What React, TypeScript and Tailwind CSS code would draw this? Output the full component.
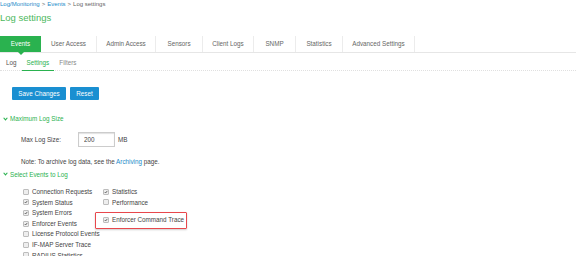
import { useState } from "react";

const tabs = [
  { label: "Events", w: "w-[41px]" },
  { label: "User Access", w: "w-[56px]" },
  { label: "Admin Access", w: "w-[59px]" },
  { label: "Sensors", w: "w-[47px]" },
  { label: "Client Logs", w: "w-[51px]" },
  { label: "SNMP", w: "w-[42px]" },
  { label: "Statistics", w: "w-[47px]" },
  { label: "Advanced Settings", w: "w-[72px]" },
];

const leftEvents = [
  { label: "Connection Requests", checked: false },
  { label: "System Status", checked: true },
  { label: "System Errors", checked: true },
  { label: "Enforcer Events", checked: true },
  { label: "License Protocol Events", checked: false },
  { label: "IF-MAP Server Trace", checked: false },
  { label: "RADIUS Statistics", checked: false },
];

function Box({ checked }: { checked: boolean }) {
  return (
    <span className="flex h-[6px] w-[6px] shrink-0 items-center justify-center rounded-[1px] border border-[#bdbdbd] bg-[#eeeeee]">
      {checked && (
        <svg viewBox="0 0 8 8" className="h-[6px] w-[6px]">
          <path d="M1.5 4.2 L3.2 6 L6.6 1.8" fill="none" stroke="#333" strokeWidth="1.4" />
        </svg>
      )}
    </span>
  );
}

function Check({ label, checked }: { label: string; checked: boolean }) {
  return (
    <div className="flex h-[10.6px] items-center gap-[3px] whitespace-nowrap">
      <Box checked={checked} />
      <span>{label}</span>
    </div>
  );
}

function Chevron() {
  return (
    <svg viewBox="0 0 8 6" className="h-[4px] w-[5px]">
      <path d="M1 1 L4 4.5 L7 1" fill="none" stroke="#2ab24f" strokeWidth="1.8" />
    </svg>
  );
}

export default function App() {
  const [size, setSize] = useState("200");

  return (
    <div className="h-[256px] w-[576px] overflow-hidden bg-white font-['Liberation_Sans',Arial,sans-serif] text-[6.3px] text-[#444]">
      <div className="flex h-[9px] items-center text-[6px] text-[#666]">
        <span className="text-[#1b8ac9]">Log/Monitoring</span>
        <span className="mx-[2px]">&gt;</span>
        <span className="text-[#1b8ac9]">Events</span>
        <span className="mx-[2px]">&gt;</span>
        <span>Log settings</span>
      </div>
      <h1 className="mt-[4px] h-[10px] text-[9.5px] leading-[10px] text-[#4cb85c]">Log settings</h1>

      <div className="mt-[13px] flex h-[17px] border-b border-[#e6e6e6]">
        {tabs.map((t, i) => (
          <div
            key={t.label}
            className={`relative flex items-center justify-center ${t.w} ${
              i === 0 ? "bg-[#2ab24f] text-white" : "border-r border-[#ececec] text-[#666]"
            }`}
          >
            {t.label}
            {i === 0 && (
              <span className="absolute -bottom-[3px] left-1/2 h-0 w-0 -translate-x-1/2 border-x-[3px] border-t-[3px] border-x-transparent border-t-[#2ab24f]" />
            )}
          </div>
        ))}
      </div>

      <div className="flex h-[18px] items-center gap-[10px] border-b border-dotted border-[#e0e0e0] pl-[6px] pt-[2px] text-[#555]">
        <span>Log</span>
        <span className="relative text-[#2ab24f]">
          Settings
          <span className="absolute -bottom-[4px] -left-[5px] -right-[5px] h-[1.5px] bg-[#2ab24f]" />
        </span>
        <span className="text-[#888]">Filters</span>
      </div>

      <div className="mt-[16px] flex gap-[4px] pl-[12px]">
        <button className="h-[13px] w-[54px] rounded-[1px] bg-[#1a8fd1] text-white">Save Changes</button>
        <button className="h-[13px] w-[29px] rounded-[1px] bg-[#1a8fd1] text-white">Reset</button>
      </div>

      <div className="mt-[15px] flex h-[8px] items-center gap-[2px] pl-[3px] text-[#2ab24f]">
        <Chevron />
        <span>Maximum Log Size</span>
      </div>

      <div className="mt-[9px] flex items-center pl-[21px]">
        <span className="w-[57px]">Max Log Size:</span>
        <input
          value={size}
          onChange={(e) => setSize(e.target.value)}
          className="h-[15px] w-[37px] border border-[#ccc] pl-[5px] text-[6.3px] text-[#444] shadow-[inset_0_1px_1px_rgba(0,0,0,0.12)] outline-none"
        />
        <span className="ml-[3px]">MB</span>
      </div>

      <div className="mt-[10px] pl-[21px]">
        Note: To archive log data, see the <span className="text-[#1b8ac9]">Archiving</span> page.
      </div>

      <div className="mt-[4px] flex h-[8px] items-center gap-[2px] pl-[3px] text-[#2ab24f]">
        <Chevron />
        <span>Select Events to Log</span>
      </div>

      <div className="mt-[8px] flex pl-[23px]">
        <div className="w-[80px]">
          {leftEvents.map((e) => (
            <Check key={e.label} label={e.label} checked={e.checked} />
          ))}
        </div>
        <div>
          <Check label="Statistics" checked />
          <Check label="Performance" checked={false} />
          <div className="-ml-[8px] mt-[4px] flex h-[17px] w-[92px] items-center rounded-[1px] border border-[#e8474c] pl-[7px] shadow-[0_1px_2px_rgba(0,0,0,0.2)]">
            <Check label="Enforcer Command Trace" checked />
          </div>
        </div>
      </div>
    </div>
  );
}
